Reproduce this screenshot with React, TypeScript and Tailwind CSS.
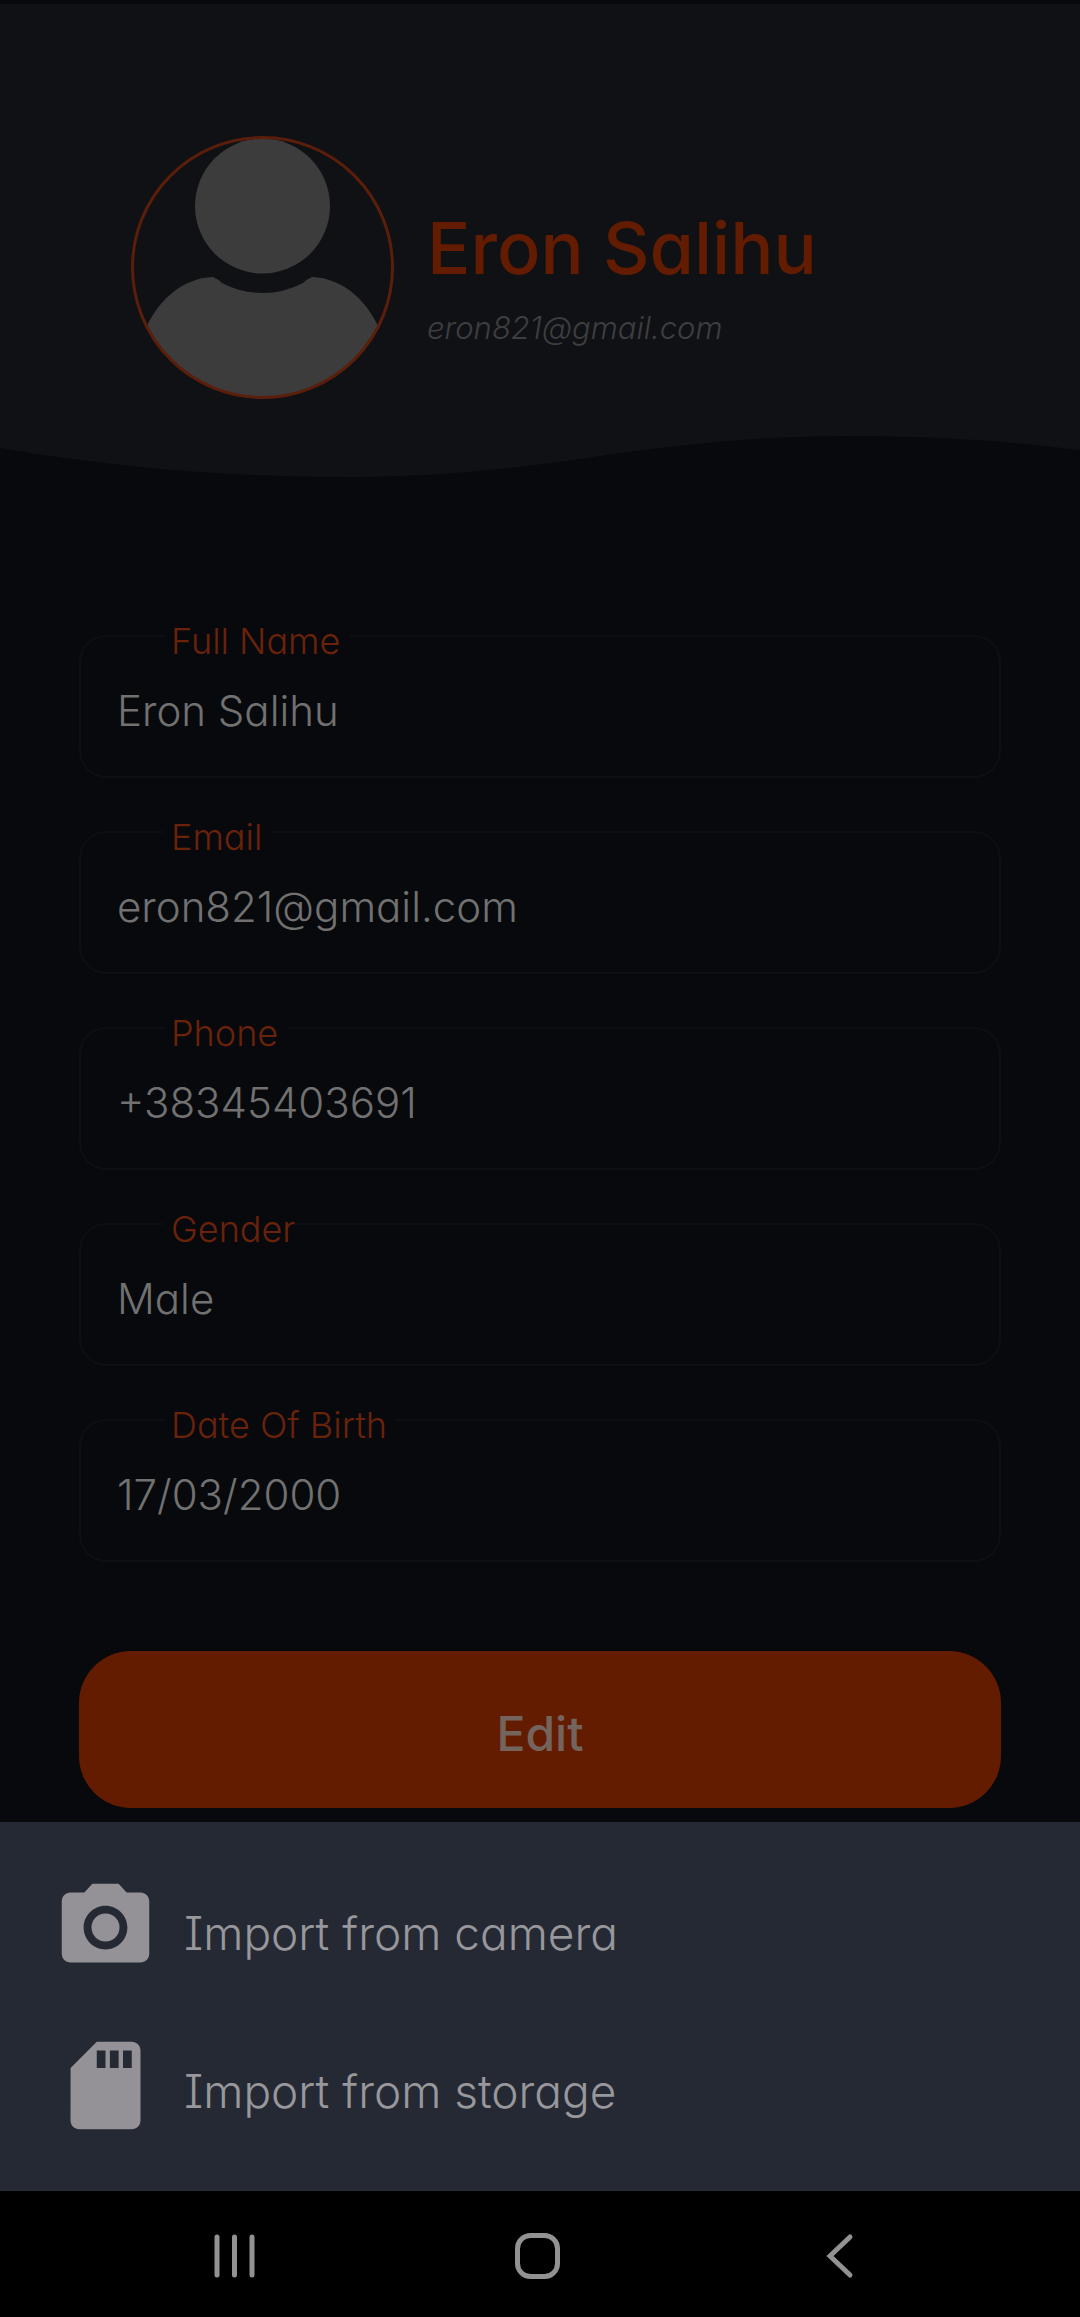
import { MdCameraAlt, MdSdCard } from "react-icons/md";

const fields = [
  { id: "name", label: "Full Name", value: "Eron Salihu", gap: "pr-[10px]" },
  { id: "email", label: "Email", value: "eron821@gmail.com", gap: "pr-[10px]" },
  { id: "phone", label: "Phone", value: "+38345403691", gap: "pr-[10px]" },
  { id: "gender", label: "Gender", value: "Male", gap: "pr-0" },
  { id: "birth", label: "Date Of Birth", value: "17/03/2000", gap: "pr-[10px]" },
];

const actions = [
  { label: "Import from camera", Icon: MdCameraAlt },
  { label: "Import from storage", Icon: MdSdCard },
];

function Avatar() {
  return (
    <svg viewBox="0 0 263 263" className="size-[263px] shrink-0" role="img" aria-label="Profile picture">
      <defs>
        <clipPath id="avatar-clip">
          <circle cx="131.5" cy="131.5" r="131" />
        </clipPath>
      </defs>
      <g clipPath="url(#avatar-clip)" fill="#3c3c3c">
        <circle cx="131.5" cy="70" r="67.5" />
        <path d="M10 204C24 164 52 142 82 141Q87 143 91 147A87 87 0 0 0 172 147Q176 143 181 141C211 142 239 164 253 204V263H10Z" />
      </g>
      <circle cx="131.5" cy="131.5" r="130" fill="none" stroke="#5a1e0a" strokeWidth="3" />
    </svg>
  );
}

function Header() {
  return (
    <header className="pt-1">
      <div className="flex items-start gap-[33px] bg-[#101115] pl-[131px] pt-[132px]">
        <Avatar />
        <div className="min-w-0 pt-[64px]">
          <h1 className="text-[72px] leading-[96px] font-medium text-[#641c00]">Eron Salihu</h1>
          <p className="pt-[12px] text-[31px] leading-[40px] font-light text-[#3e3e40] italic">eron821@gmail.com</p>
        </div>
      </div>
      <svg viewBox="0 0 1080 79" preserveAspectRatio="none" className="block h-[79px] w-full" aria-hidden="true">
        <path d="M0 0H1080V51C1000 41 925 37 850 37C770 37 690 44 600 57C510 71 430 78 345 78C220 78 105 67 0 49Z" fill="#101115" />
      </svg>
    </header>
  );
}

export default function App() {
  return (
    <div className="flex min-h-screen flex-col bg-[#08090c] font-['Inter','Liberation_Sans',sans-serif] [font-feature-settings:'cv11','cv08']">
      <Header />
      <main className="px-[79px] pt-[157px] pb-[14px]">
        <form onSubmit={(e) => e.preventDefault()}>
          <div className="flex flex-col gap-[53px]">
            {fields.map((f) => (
              <div key={f.id} className="relative">
                <label
                  htmlFor={f.id}
                  className={`absolute -top-[18px] left-[84px] bg-[#08090c] pl-[8px] text-[36px] leading-[48px] font-light text-[#6a220b] ${f.gap}`}
                >
                  {f.label}
                </label>
                <input
                  id={f.id}
                  type="text"
                  defaultValue={f.value}
                  className="block h-[143px] w-full rounded-[27px] border-2 border-[#0e0f12] bg-transparent pt-[7px] pr-6 pl-[36px] text-[42px] font-light text-[#717171] outline-none"
                />
              </div>
            ))}
          </div>
          <button
            type="submit"
            className="mt-[89px] flex h-[157px] w-full items-center justify-center rounded-[52px] bg-[#641c00] pt-[8px] text-[48px] leading-[60px] font-medium text-[#74645e]"
          >
            Edit
          </button>
        </form>
      </main>
      <section className="flex flex-col gap-[53px] bg-[#252933] px-[53px] pt-[53px] pb-[53px]" aria-label="Import picture">
        {actions.map(({ label, Icon }) => (
          <button key={label} type="button" className="flex items-center gap-[26px] text-left text-[46px] leading-[60px] font-light text-[#97979c]">
            <Icon className="size-[105px] shrink-0 text-[#949297]" />
            <span className="pt-[10px]">{label}</span>
          </button>
        ))}
      </section>
      <nav className="grid h-[126px] grid-cols-3 bg-black pr-[88px] pl-[84px] text-[#929292]" aria-label="System navigation">
        <button type="button" aria-label="Recent apps" className="flex items-center justify-center pt-1">
          <svg viewBox="0 0 48 48" className="size-[48px]" fill="none" stroke="currentColor" strokeWidth="5" strokeLinecap="round">
            <path d="M6 5V43M23.500 5V43M41 5V43" />
          </svg>
        </button>
        <button type="button" aria-label="Home" className="flex items-center justify-center pt-1">
          <svg viewBox="0 0 48 48" className="size-[48px]" fill="none" stroke="currentColor" strokeWidth="5">
            <rect x="3.500" y="3.500" width="40" height="41" rx="13" />
          </svg>
        </button>
        <button type="button" aria-label="Back" className="flex items-center justify-center pt-1">
          <svg viewBox="0 0 48 48" className="size-[48px]" fill="none" stroke="currentColor" strokeWidth="5" strokeLinecap="round">
            <path d="M33 5L13 24L33 43" />
          </svg>
        </button>
      </nav>
    </div>
  );
}
